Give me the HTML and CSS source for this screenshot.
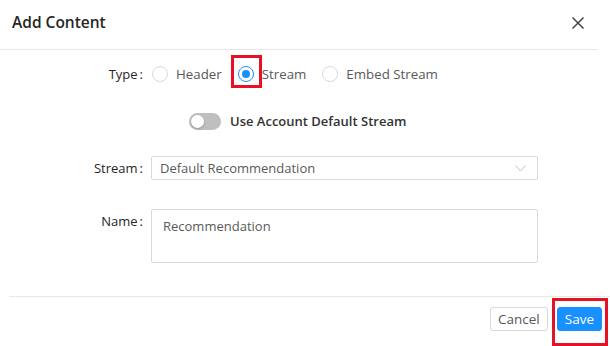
FILE: index.html
```html
<!DOCTYPE html>
<html lang="en">
<head>
  <meta charset="UTF-8" />
  <title>Add Content</title>
  <link rel="stylesheet" href="styles.css">
</head>
<body>
  <div class="modal">
    <div class="modal-header">
      <h2 class="modal-title">Add Content</h2>
      <span class="close-btn">
        <svg width="12" height="12" viewBox="0 0 12 12">
          <path d="M0.5 0.5 L11.5 11.5 M11.5 0.5 L0.5 11.5" stroke="#444" stroke-width="1.5" fill="none" />
        </svg>
      </span>
    </div>

    <div class="modal-body">
      <!-- Type -->
      <div class="form-row type-row">
        <label class="form-label">Type</label>
        <div class="radio-group">
          <label class="radio-item">
            <span class="radio"></span>
            <span class="radio-text">Header</span>
          </label>
          <label class="radio-item">
            <span class="radio checked"></span>
            <span class="radio-text">Stream</span>
          </label>
          <label class="radio-item">
            <span class="radio"></span>
            <span class="radio-text">Embed Stream</span>
          </label>
        </div>
      </div>

      <!-- Default stream switch -->
      <div class="form-row switch-row">
        <span></span>
        <div class="switch-wrap">
          <span class="switch"><span class="switch-knob"></span></span>
          <span class="switch-text">Use Account Default Stream</span>
        </div>
      </div>

      <!-- Stream -->
      <div class="form-row stream-row">
        <label class="form-label">Stream</label>
        <div class="select">
          <span class="select-value">Default Recommendation</span>
          <svg class="select-arrow" width="11" height="7" viewBox="0 0 11 7">
            <path d="M0.5 0.5 L5.5 6 L10.5 0.5" stroke="#bfbfbf" stroke-width="1" fill="none" />
          </svg>
        </div>
      </div>

      <!-- Name -->
      <div class="form-row name-row">
        <label class="form-label">Name</label>
        <div class="textarea">Recommendation</div>
      </div>
    </div>

    <div class="modal-footer">
      <button class="btn">Cancel</button>
      <button class="btn btn-primary">Save</button>
    </div>

    <!-- annotation boxes -->
    <div class="mark mark-radio"></div>
    <div class="mark mark-save"></div>
  </div>
</body>
</html>
```

FILE: styles.css
```css
* {
  margin: 0;
  padding: 0;
  box-sizing: border-box;
  font-family: 'Open Sans', 'Noto Sans', sans-serif;
}

body {
  width: 610px;
  height: 346px;
  overflow: hidden;
  background: #ffffff;
  font-size: 13px;
  color: #595959;
}

.modal {
  position: relative;
  height: 346px;
}

/* Header */
.modal-header {
  display: flex;
  justify-content: space-between;
  align-items: flex-start;
  height: 50px;
  margin-right: 12px;
  padding: 11px 14px 0 12px;
  border-bottom: 1px solid #e8e8e8;
}

.modal-title {
  font-size: 15.5px;
  font-weight: 600;
  line-height: 22px;
  color: #262626;
}

.close-btn {
  display: block;
  width: 12px;
  height: 12px;
  margin-top: 6px;
}

.close-btn svg {
  display: block;
}

/* Body */
.form-row {
  display: grid;
  grid-template-columns: 151px 387px;
  align-items: center;
}

.form-label {
  text-align: right;
  color: #262626;
  font-weight: 500;
  line-height: 24px;
}

.form-label::after {
  content: ':';
  margin: 0 8px 0 2px;
}

.type-row {
  margin-top: 12px;
  height: 24px;
}

.radio-group {
  display: flex;
  align-items: center;
  padding-left: 1px;
}

.radio-item {
  display: inline-flex;
  align-items: center;
  margin-right: 8px;
}

.radio {
  width: 16px;
  height: 16px;
  border: 1px solid #d9d9d9;
  border-radius: 50%;
  background: #fff;
  position: relative;
}

.radio.checked {
  border-color: #1890ff;
}

.radio.checked::after {
  content: '';
  position: absolute;
  top: 3px;
  left: 3px;
  width: 8px;
  height: 8px;
  border-radius: 50%;
  background: #1890ff;
}

.radio-text {
  padding: 0 8px;
  font-size: 13.3px;
  line-height: 24px;
}

.switch-row {
  margin-top: 23px;
  height: 24px;
}

.switch-wrap {
  display: flex;
  align-items: center;
  padding-left: 38px;
}

.switch {
  position: relative;
  display: block;
  width: 32px;
  height: 17px;
  border-radius: 9px;
  background: #bfbfbf;
}

.switch-knob {
  position: absolute;
  top: 2px;
  left: 2px;
  width: 13px;
  height: 13px;
  border-radius: 50%;
  background: #fff;
  box-shadow: 0 1px 2px rgba(0, 35, 11, 0.25);
}

.switch-text {
  margin-left: 9px;
  font-weight: 600;
  color: #333;
  line-height: 24px;
}

.stream-row {
  margin-top: 23px;
}

.select {
  display: flex;
  justify-content: space-between;
  align-items: center;
  height: 24px;
  padding: 0 11px 0 8px;
  border: 1px solid #d9d9d9;
  border-radius: 2px;
}

.select-arrow {
  display: block;
  margin-top: 1px;
}

.name-row {
  margin-top: 29px;
  align-items: start;
}

.textarea {
  height: 54px;
  padding: 6px 11px;
  border: 1px solid #d9d9d9;
  border-radius: 2px;
  line-height: 20px;
}

/* Footer */
.modal-footer {
  display: flex;
  justify-content: flex-end;
  gap: 9px;
  margin-top: 33px;
  margin-left: 9px;
  padding: 10px 8px 0 0;
  border-top: 1px solid #e8e8e8;
}

.btn {
  height: 24px;
  padding: 0 7px;
  font-size: 13.5px;
  color: #595959;
  background: #fff;
  border: 1px solid #d9d9d9;
  border-radius: 3px;
  cursor: pointer;
}

.btn-primary {
  padding: 0 7px;
  color: #fff;
  background: #1890ff;
  border-color: #1890ff;
}

/* Red annotation boxes */
.mark {
  position: absolute;
  border: 3px solid #e81123;
}

.mark-radio {
  left: 231px;
  top: 55px;
  width: 31px;
  height: 33px;
}

.mark-save {
  left: 552px;
  top: 298px;
  width: 56px;
  height: 48px;
}
```
